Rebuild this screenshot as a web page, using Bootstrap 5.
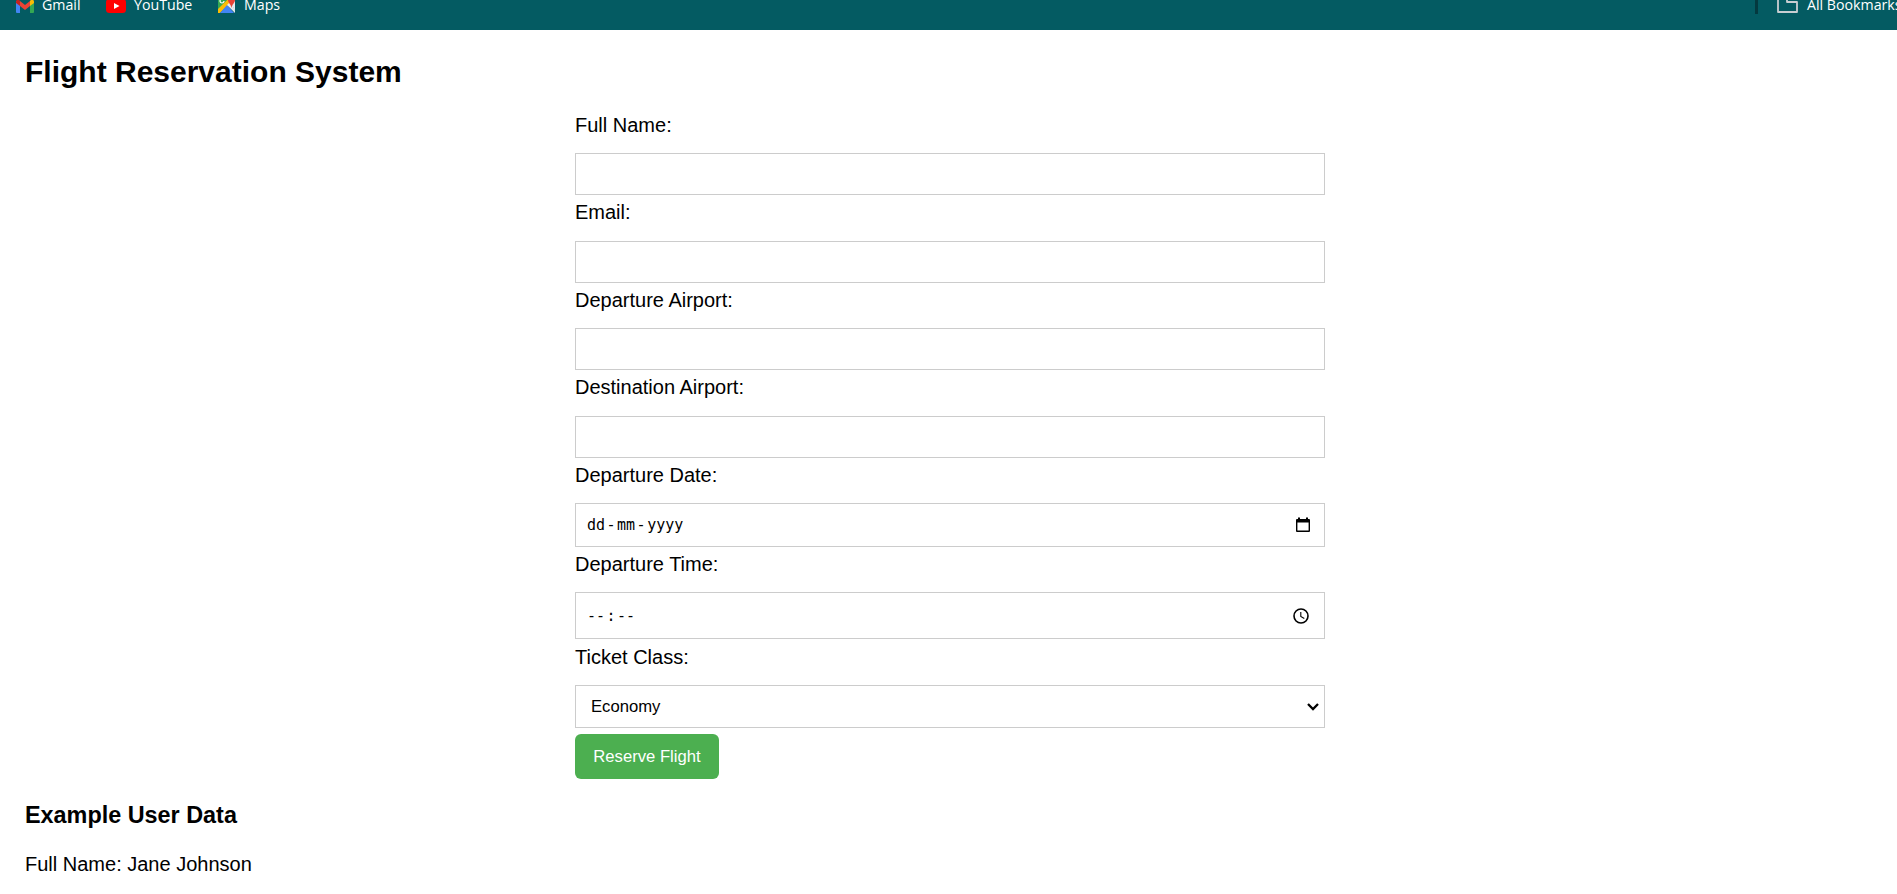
<!DOCTYPE html>
<html lang="en">
<head>
<meta charset="utf-8">
<title>Flight Reservation System</title>
<link href="https://cdn.jsdelivr.net/npm/bootstrap@5.3.0/dist/css/bootstrap.min.css" rel="stylesheet">
<style>
body{font-family:"Liberation Sans",Arial,sans-serif;font-size:20px;color:#000;background:#fff;height:894px;overflow:hidden}
.bookmarks{height:30px;background:#045b62;color:#fff;font:14.2px/20px "Open Sans","Noto Sans",sans-serif;padding-left:16px}
.bookmarks .entry{height:20px;margin-top:-5px;white-space:nowrap}
.bookmarks .entry span{margin-top:-1px}
.bookmarks svg{flex:none}
.bar-rule{flex:none;width:3px;height:18px;background:#04393f}
.page-title{font-size:30px;font-weight:700;line-height:34px;margin:25px 0 0}
.booking{width:750px;margin:19px 0 0 550px}
.booking label{display:block;height:45px;line-height:34px}
.booking label.tall{height:46px}
.form-control,.form-select{border:1px solid #ccc;border-radius:0;color:#000;height:42px;padding:0 12px 0 11px;background-color:#fff}
.date-box{height:44px}
.time-box{height:47px}
.mono-text{font:15px/20px "DejaVu Sans Mono",monospace}
.sep{display:inline-block;width:12px;text-align:center}
.form-select{height:43px;font-size:16.67px;padding:0 15px;background-image:url("data:image/svg+xml,%3csvg xmlns='http://www.w3.org/2000/svg' viewBox='0 0 12 8'%3e%3cpath fill='none' stroke='%23000' stroke-width='2.3' d='M1 1l5 5 5-5'/%3e%3c/svg%3e");background-size:12px 8px;background-position:right 5px center}
.btn-reserve{display:block;width:144px;height:45px;margin-top:6px;padding:0;border:0;border-radius:6px;background:#4caf50!important;color:#fff!important;font-size:16.67px}
.section-title{font-size:23.4px;font-weight:700;line-height:28px;margin:22px 0 0}
</style>
</head>
<body>
<nav class="bookmarks d-flex align-items-start overflow-hidden">
  <div class="entry d-flex align-items-center">
    <svg width="18" height="14" viewBox="0 0 18 14" style="margin-top:1px"><path fill="#4285f4" d="M0 2h4v12H1a1 1 0 0 1-1-1z"/><path fill="#34a853" d="M14 2h4v11a1 1 0 0 1-1 1h-3z"/><path fill="#ea4335" d="M4 2l5 4 5-4v5l-5 4-5-4z"/><path fill="#c5221f" d="M0 3c0-3 3-3 4-1v5L0 4z"/><path fill="#fbbc04" d="M14 2c1-2 4-2 4 1v1l-4 3z"/></svg>
    <span style="margin-left:8px;width:64px">Gmail</span>
    <svg width="20" height="14" viewBox="0 0 20 14" style="margin-top:1px"><rect width="20" height="14" rx="3.5" fill="#f00"/><path fill="#fff" d="M8 4l5.500 3L8 10z"/></svg>
    <span style="margin-left:8px;width:84px">YouTube</span>
    <svg width="17" height="17" viewBox="0 0 17 17" style="margin-top:-1px"><path fill="#34a853" d="M0 0h12L0 15z"/><path fill="#e8eaed" d="M12 3h5v13z"/><path fill="#fbbc04" d="M0 13L13 0l3 3L2 17H0z"/><path fill="#4285f4" d="M2 17l7-8 7 8z"/><path fill="#e8eaed" d="M9 9l4-4 4 10v2z"/><path fill="#ea4335" d="M10 4a3.500 3.500 0 0 1 7 0c0 3-3 4-3.500 8C13 8 10 7 10 4z"/><path fill="none" stroke="#fff" stroke-width="1.200" d="M6 5a2 2 0 1 1-2-2"/></svg>
    <span style="margin-left:9px">Maps</span>
  </div>
  <div class="entry d-flex align-items-center ms-auto" style="width:142px">
    <i class="bar-rule"></i>
    <svg width="21" height="18" viewBox="0 0 21 18" style="margin:-3px 9px 0 19px"><path fill="none" stroke="#c9ced2" stroke-width="1.800" stroke-linejoin="round" d="M1 2h9v5h10v10H1z"/></svg>
    <span>All Bookmarks</span>
  </div>
</nav>
<main style="padding:0 25px">
  <h2 class="page-title">Flight Reservation System</h2>
  <form class="booking">
    <label for="name">Full Name:</label>
    <input id="name" type="text" class="form-control">
    <label for="email" class="tall">Email:</label>
    <input id="email" type="email" class="form-control">
    <label for="from">Departure Airport:</label>
    <input id="from" type="text" class="form-control">
    <label for="to" class="tall">Destination Airport:</label>
    <input id="to" type="text" class="form-control">
    <label>Departure Date:</label>
    <div class="form-control date-box d-flex align-items-center justify-content-between">
      <span class="mono-text">dd<span class="sep">-</span>mm<span class="sep">-</span>yyyy</span>
      <svg width="16" height="16" viewBox="0 0 16 16" style="margin-right:1px"><path fill="#000" d="M2 2h1V.5h2V2h6V.5h2V2h1a1 1 0 0 1 1 1v11a1 1 0 0 1-1 1H2a1 1 0 0 1-1-1V3a1 1 0 0 1 1-1zm.4 3.500v8h11.200v-8z"/></svg>
    </div>
    <label>Departure Time:</label>
    <div class="form-control time-box d-flex align-items-center justify-content-between">
      <span class="mono-text">--<span class="sep">:</span>--</span>
      <svg width="16" height="16" viewBox="0 0 16 16" style="margin-right:3px"><circle cx="8" cy="8" r="7" fill="none" stroke="#000" stroke-width="1.600"/><path d="M7.800 4v4.500l3.500 2" fill="none" stroke="#000" stroke-width="1.100"/></svg>
    </div>
    <label for="class" class="tall" style="line-height:36px">Ticket Class:</label>
    <select id="class" class="form-select"><option>Economy</option></select>
    <button type="button" class="btn btn-success btn-reserve">Reserve Flight</button>
  </form>
  <h3 class="section-title">Example User Data</h3>
  <p style="margin:21px 0 0;line-height:28px">Full Name: Jane Johnson</p>
</main>
<script src="https://cdn.jsdelivr.net/npm/bootstrap@5.3.0/dist/js/bootstrap.bundle.min.js"></script>
</body>
</html>
